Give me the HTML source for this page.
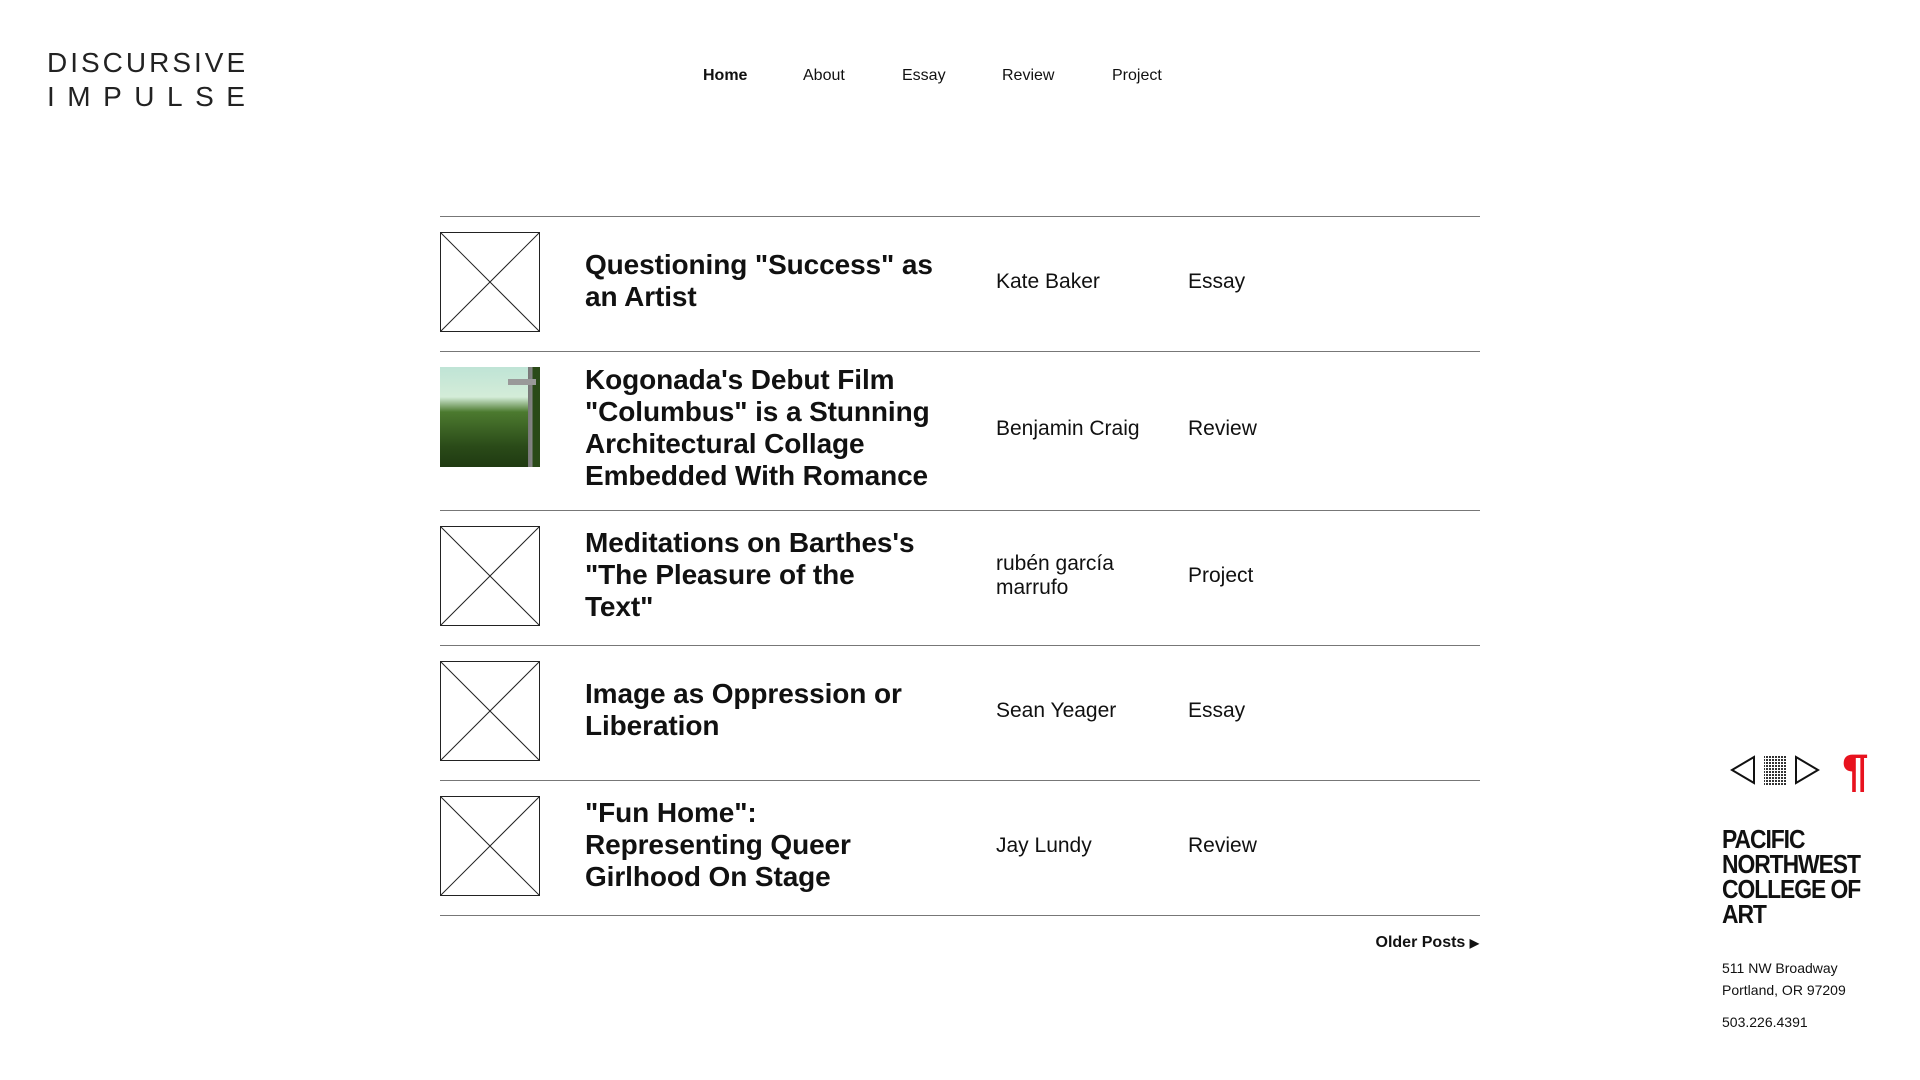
<!DOCTYPE html>
<html><head><meta charset="utf-8"><style>
*{margin:0;padding:0;box-sizing:border-box}
body{width:1920px;height:1080px;background:#fff;font-family:"Liberation Sans",sans-serif;color:#111;position:relative;overflow:hidden}
.abs{position:absolute}
.logo{left:47px;top:46px;font-size:28px;line-height:34px;letter-spacing:3px;color:#222}
.nav a{position:absolute;top:67px;font-size:16px;color:#111;text-decoration:none}
.line{position:absolute;left:440px;width:1040px;height:1px;background:#777}
.thumb{position:absolute;left:440px;width:100px;height:100px;border:1px solid #222}
.title{position:absolute;left:585px;font-size:28px;font-weight:bold;line-height:32px;white-space:nowrap;letter-spacing:-0.1px}
.au,.cat{position:absolute;font-size:21px;line-height:24px;white-space:nowrap}
.au{left:996px}.cat{left:1188px}
</style></head><body>
<div class="abs logo">DISCURSIVE<br><span style="letter-spacing:12.5px">IMPULSE</span></div>
<div class="nav">
<a style="left:703px;font-weight:bold">Home</a>
<a style="left:803px">About</a>
<a style="left:902px">Essay</a>
<a style="left:1002px">Review</a>
<a style="left:1112px">Project</a>
</div>

<div class="line" style="top:216px"></div>
<div class="line" style="top:351px"></div>
<div class="line" style="top:510px"></div>
<div class="line" style="top:645px"></div>
<div class="line" style="top:780px"></div>
<div class="line" style="top:915px"></div>

<svg class="thumb" style="top:232px" viewBox="0 0 100 100" preserveAspectRatio="none"><path d="M0 0L100 100M100 0L0 100" stroke="#222" stroke-width="1"/></svg>
<div class="abs" style="left:440px;top:367px;width:100px;height:100px;background:linear-gradient(#bfe4d6 0%,#d4ecd8 30%,#4c7a2f 45%,#2a4a18 80%,#1f3a12 100%)"><div class="abs" style="left:70px;top:0;width:30px;height:100px;background:linear-gradient(90deg,transparent 0,transparent 60%,#777 60%,#888 75%,#2a4a18 75%)"></div><div class="abs" style="left:68px;top:12px;width:28px;height:6px;background:#999"></div></div>
<svg class="thumb" style="top:526px" viewBox="0 0 100 100" preserveAspectRatio="none"><path d="M0 0L100 100M100 0L0 100" stroke="#222" stroke-width="1"/></svg>
<svg class="thumb" style="top:661px" viewBox="0 0 100 100" preserveAspectRatio="none"><path d="M0 0L100 100M100 0L0 100" stroke="#222" stroke-width="1"/></svg>
<svg class="thumb" style="top:796px" viewBox="0 0 100 100" preserveAspectRatio="none"><path d="M0 0L100 100M100 0L0 100" stroke="#222" stroke-width="1"/></svg>

<div class="title" style="top:249px">Questioning "Success" as<br>an Artist</div>
<div class="au" style="top:270px">Kate Baker</div><div class="cat" style="top:270px">Essay</div>

<div class="title" style="top:364px">Kogonada's Debut Film<br>"Columbus" is a Stunning<br>Architectural Collage<br>Embedded With Romance</div>
<div class="au" style="top:417px">Benjamin Craig</div><div class="cat" style="top:417px">Review</div>

<div class="title" style="top:527px">Meditations on Barthes's<br>"The Pleasure of the<br>Text"</div>
<div class="au" style="top:552px">rubén garcía<br>marrufo</div><div class="cat" style="top:564px">Project</div>

<div class="title" style="top:678px">Image as Oppression or<br>Liberation</div>
<div class="au" style="top:699px">Sean Yeager</div><div class="cat" style="top:699px">Essay</div>

<div class="title" style="top:797px">"Fun Home":<br>Representing Queer<br>Girlhood On Stage</div>
<div class="au" style="top:834px">Jay Lundy</div><div class="cat" style="top:834px">Review</div>

<div class="abs" style="right:441px;top:934px;font-size:16px;font-weight:bold">Older Posts <span style="font-size:12px">▶</span></div>

<svg class="abs" style="left:1730px;top:750px" width="140" height="42" viewBox="0 0 140 42">
<path d="M2 20L24 7V33Z" fill="none" stroke="#111" stroke-width="2"/>
<rect x="34" y="6" width="22" height="30" fill="url(#d)"/>
<defs><pattern id="d" width="3" height="3" patternUnits="userSpaceOnUse"><rect width="2" height="2" fill="#333"/></pattern></defs>
<path d="M66 7L88 20L66 33Z" fill="none" stroke="#111" stroke-width="2"/>
<text x="112" y="38" font-family="Liberation Sans" font-weight="bold" font-size="48" fill="#e8121e">¶</text>
</svg>
<div class="abs" style="left:1722px;top:827px;font-size:26px;line-height:25px;font-weight:bold;letter-spacing:-1.2px;transform:scaleX(0.88);transform-origin:left">PACIFIC<br>NORTHWEST<br>COLLEGE OF<br>ART</div>
<div class="abs" style="left:1722px;top:957px;font-size:14px;line-height:22px">511 NW Broadway<br>Portland, OR 97209</div>
<div class="abs" style="left:1722px;top:1014px;font-size:14px">503.226.4391</div>
</body></html>
